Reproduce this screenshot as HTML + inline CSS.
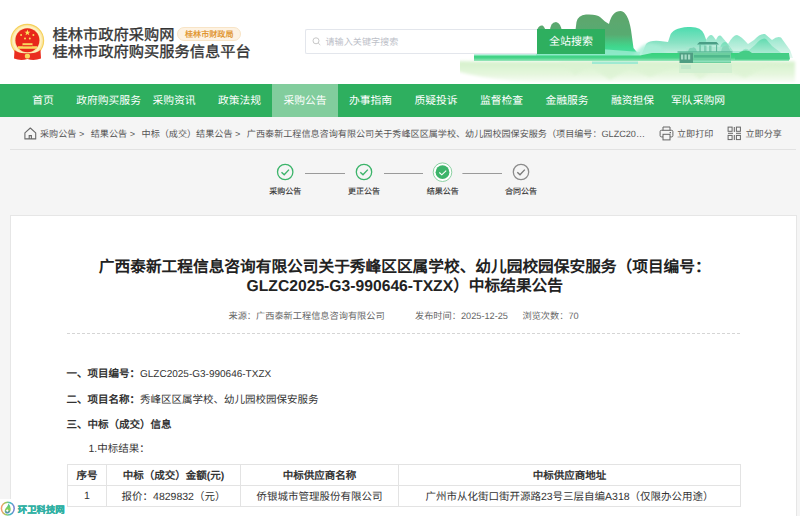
<!DOCTYPE html>
<html lang="zh-CN">
<head>
<meta charset="utf-8">
<style>
*{margin:0;padding:0;box-sizing:border-box}
html,body{width:800px;height:516px;overflow:hidden}
body{text-rendering:geometricPrecision;font-family:"Liberation Sans",sans-serif;background:#f5f5f5;position:relative;color:#333}
.abs{position:absolute;white-space:nowrap}
#hdr{position:absolute;left:0;top:0;width:800px;height:84px;background:#fff}
#nav{position:absolute;left:0;top:84px;width:800px;height:33px;background:#2eaf5f}
#nav .it{position:absolute;white-space:nowrap;top:0;height:33px;width:65.5px;text-align:center;line-height:34.5px;font-size:10.8px;color:#fff}
#nav .on{background:#82cd9d}
.bc{font-size:9.1px;color:#555;line-height:12px}
.bc i.g{display:inline-block;width:1.5px}
.step{position:absolute;font-size:8px;color:#333;-webkit-text-stroke:0.15px #333;text-align:center;width:40px}
#box{position:absolute;left:10px;top:215px;width:787px;height:400px;background:#fff;border:1px solid #e6e6e6}
.ttl{position:absolute;left:0;width:800px;text-align:center;font-size:15.7px;font-weight:bold;color:#222;line-height:19.5px}
.meta{font-size:9.2px;color:#666}
.sec{font-size:10.5px;color:#333}
.sec b{font-weight:bold}
table{position:absolute;left:67px;top:464px;width:674px;border-collapse:collapse;font-size:10.5px;color:#333}
td,th{border:1px solid #e3e3e3;height:21px;text-align:center;padding:0}
th{font-weight:bold}
</style>
</head>
<body>
<div id="hdr">
  <!-- emblem -->
  <svg class="abs" style="left:5px;top:18px" width="45" height="45" viewBox="0 0 45 45">
    <circle cx="22.3" cy="22.6" r="16.3" fill="#fbe7a3" stroke="#f6d15c" stroke-width="1.2"/>
    <circle cx="22.3" cy="22.6" r="13.6" fill="none" stroke="#fff1c4" stroke-width="1.5"/>
    <circle cx="22.4" cy="22.3" r="12" fill="#e8271b"/>
    <polygon points="22.4,11.6 23.2,13.8 25.4,13.8 23.6,15.1 24.3,17.3 22.4,16 20.5,17.3 21.2,15.1 19.4,13.8 21.6,13.8" fill="#fbe25c"/>
    <circle cx="16.1" cy="17" r="0.95" fill="#fbe25c"/><circle cx="28.4" cy="17" r="0.95" fill="#fbe25c"/>
    <circle cx="20" cy="20.5" r="0.95" fill="#fbe25c"/><circle cx="24.8" cy="20.5" r="0.95" fill="#fbe25c"/>
    <rect x="17.5" y="25.2" width="10" height="2.2" fill="#f9d65e"/>
    <rect x="13" y="28.2" width="19" height="2.6" fill="#f9d65e"/>
    <rect x="18" y="27.4" width="9" height="0.8" fill="#e8271b"/>
    <path d="M9.5 32 Q15 36 22.4 35 Q30 36 35.5 32 L36 40.5 Q29 43 22.4 41 Q15.5 43 9 40.5 Z" fill="#ea2d1f"/>
    <circle cx="22.4" cy="38" r="2.6" fill="#f9d65e"/>
  </svg>
  <div class="abs" style="left:52.5px;top:26.5px;font-size:15.25px;line-height:17px;color:#333;-webkit-text-stroke:0.35px #333">桂林市政府采购网<br>桂林市政府购买服务信息平台</div>
  <div class="abs" style="left:177px;top:26.5px;width:63.5px;height:14.5px;border-radius:8px;background:#fdf2e2;border:0.6px solid #f8e4c6;color:#e0901f;-webkit-text-stroke:0.2px #e0901f;font-size:8.1px;line-height:14.5px;text-align:center;padding-left:1px">桂林市财政局</div>
  <!-- landscape -->
  <svg class="abs" style="left:460px;top:0" width="340" height="84" viewBox="460 0 340 84">
    <defs>
      <linearGradient id="m1" x1="0" y1="0" x2="0" y2="1"><stop offset="0" stop-color="#5ea56c"/><stop offset="0.5" stop-color="#58ab71"/><stop offset="0.75" stop-color="#40d68c"/><stop offset="1" stop-color="#4be6ad"/></linearGradient>
      <linearGradient id="m2" x1="0" y1="0" x2="0" y2="1"><stop offset="0" stop-color="#3ddaa8"/><stop offset="0.5" stop-color="#7fe0bf"/><stop offset="1" stop-color="#d2f4e6"/></linearGradient>
      <linearGradient id="m3" x1="0" y1="0" x2="0" y2="1"><stop offset="0" stop-color="#84e3c4"/><stop offset="1" stop-color="#e4f8ef"/></linearGradient><linearGradient id="m4" x1="0" y1="0" x2="0" y2="1"><stop offset="0" stop-color="#4fd6a6"/><stop offset="1" stop-color="#b8eed9"/></linearGradient>
      <linearGradient id="rf" x1="0" y1="0" x2="0" y2="1"><stop offset="0" stop-color="#d5f1cb"/><stop offset="0.6" stop-color="#e4f6dc"/><stop offset="1" stop-color="#f7fcf4"/></linearGradient>
      <linearGradient id="bd" x1="0" y1="0" x2="0" y2="1"><stop offset="0" stop-color="#36d27c"/><stop offset="0.6" stop-color="#45d488"/><stop offset="1" stop-color="#9ae6bb"/></linearGradient>
      <filter id="bl" x="-10%" y="-10%" width="120%" height="120%"><feGaussianBlur stdDeviation="0.5"/></filter>
      <filter id="bl2" x="-10%" y="-30%" width="120%" height="160%"><feGaussianBlur stdDeviation="1.5"/></filter>
    </defs>
    <path d="M436 64 Q448 60.5 474 61.5 L795 61.5 L795 82 L530 82 Q470 79 436 64 Z" fill="url(#rf)" filter="url(#bl2)"/>
    <path d="M560 62 L575 75 L590 66 L610 80 L630 68 L650 77 L680 64 L700 79 L720 66 L745 78 L770 64 L790 62 Z" fill="#dcf3d3" opacity="0.7" filter="url(#bl2)"/>
    <path d="M640 58 L646 44 Q650 40 660 41 L668 42 L670 36 Q672 28 688 27 Q701 26 704 34 L707 42 L709 40 L713 46 L716 58 Z" fill="url(#m2)" opacity="0.92" filter="url(#bl)"/>
    <path d="M704 58 L706 40 Q710 33 713 36 L716 40 Q719 33 722 37 L728 44 Q733 35 737 35 Q741 36 748 44 L754 40 Q760 33 765 34 L772 40 Q777 36 781 37.5 L790 50 L793 58 Z" fill="url(#m3)" opacity="0.95" filter="url(#bl)"/>
    <path d="M716 58 L721 45 Q724 40 727 43 L733 51 L742 51 Q745 47 749 50 L755 45 Q762 37 766 39 L772 46 L780 52 L786 58 Z" fill="url(#m4)" opacity="0.75" filter="url(#bl)"/>
    <path d="M536 58 L537.5 29 Q539 25 542.5 25.5 Q545 27 546 32 L550 32 Q550 22 556 22 Q561 23 562 32 L575 34 L576.5 22 Q578 15 586 14.5 Q597 14 600 17 L605 21.5 L609 24 Q612 11 620.75 11 Q628 12 631 30 L633.5 48 L640 56 L642 58 Z" fill="url(#m1)" filter="url(#bl)"/>
    <path d="M474 51 L520 52 L560 50 L600 49 L640 52 L640 58 L474 58 Z" fill="#a4ecd4" opacity="0.75" filter="url(#bl)"/>
    <path d="M640 48 Q648 40 660 46 L668 56 L630 58 Z" fill="#a6eed6" opacity="0.8" filter="url(#bl2)"/>
    <path d="M474 55.5 L640 55.5 L652 53 L789 53 L789 61 L640 61 L474 61 Z" fill="url(#bd)" filter="url(#bl)"/>
    <path d="M735 56 Q745 47 752 53 L789 53.5 L790 59.5 L735 59.5 Z" fill="#45cd86" filter="url(#bl)"/>
    <rect x="592" y="61.5" width="46" height="2.5" fill="#9fead2"/>
    <rect x="686" y="47" width="44" height="5" fill="#a9e6cf" opacity="0.8"/>
    <path d="M688 52 Q689 47 692 48 Q694 46 696 49 L697 52 Z" fill="#7fd4b6"/>
    <path d="M697 44.5 L719 44.5 L716.5 42 L699.5 42 Z" fill="#4a9e86"/>
    <rect x="699.5" y="44.5" width="1.1" height="7.5" fill="#5fb89b"/><rect x="704" y="45.5" width="2.5" height="6.5" fill="#7fcdb2"/><rect x="709" y="45.5" width="2.5" height="6.5" fill="#7fcdb2"/><rect x="716" y="44.5" width="1.1" height="7.5" fill="#5fb89b"/>
    <path d="M721 52 Q722 45 725 46 Q728 44 729 48 L731 52 Z" fill="#86d8bb"/>
    <rect x="677.5" y="51.3" width="55" height="1.4" fill="#58b996"/>
    <path d="M679.5 52.7 L693 52.7 L693 63 L679.5 63 Z" fill="#4f9e83"/>
    <rect x="681" y="54.5" width="2.2" height="5" fill="#a5dcc6"/><rect x="684.5" y="54.5" width="2.2" height="5" fill="#a5dcc6"/><rect x="688" y="54.5" width="2.2" height="5" fill="#a5dcc6"/>
    <path d="M693 52.7 L731 52.7 L731 63 L693 63 Z" fill="#6ccf9f"/>
    <rect x="694" y="55" width="36" height="2.6" fill="#4fb88c"/>
    <rect x="693" y="60.5" width="38" height="1.6" fill="#8ee0bc"/>
    <path d="M679 64 L732 64 L732 73 L679 73 Z" fill="#cdeecf" opacity="0.7" filter="url(#bl)"/>
    <rect x="681" y="65" width="10" height="4" fill="#b5e3c6" opacity="0.6"/>
  </svg>
  <!-- search -->
  <div class="abs" style="left:305px;top:29px;width:233px;height:25px;border:1px solid #e3e6ec;border-right:none;background:#fff;border-radius:2px 0 0 2px"></div>
  <svg class="abs" style="left:312px;top:37px" width="10" height="9" viewBox="0 0 10 9"><circle cx="4" cy="3.8" r="3" fill="none" stroke="#c8c8c8" stroke-width="1"/><line x1="6.2" y1="6" x2="8.3" y2="8" stroke="#c8c8c8" stroke-width="1"/></svg>
  <div class="abs" style="left:325.5px;top:34.5px;font-size:9.1px;line-height:14px;color:#bcc0c8">请输入关键字搜索</div>
  <div class="abs" style="left:537px;top:29px;width:68px;height:25px;background:#2eaf5f;color:#fff;font-size:11px;line-height:27px;text-align:center">全站搜索</div>
</div>
<div id="nav">
  <div class="it" style="left:10.3px">首页</div>
  <div class="it" style="left:75.8px">政府购买服务</div>
  <div class="it" style="left:141.3px">采购资讯</div>
  <div class="it" style="left:206.8px">政策法规</div>
  <div class="it on" style="left:272.3px">采购公告</div>
  <div class="it" style="left:337.8px">办事指南</div>
  <div class="it" style="left:403.3px">质疑投诉</div>
  <div class="it" style="left:468.8px">监督检查</div>
  <div class="it" style="left:534.3px">金融服务</div>
  <div class="it" style="left:599.8px">融资担保</div>
  <div class="it" style="left:665.3px">军队采购网</div>
</div>
<!-- breadcrumb -->
<svg class="abs" style="left:23.5px;top:126.5px" width="13" height="13" viewBox="0 0 13 13"><path d="M0.9 5.8 L6.3 1 L11.7 5.8 V11.9 H0.9 Z" fill="none" stroke="#6a6a6a" stroke-width="1.1" stroke-linejoin="round"/><path d="M5.2 11.9 V8.6 H7.4 V11.9" fill="none" stroke="#6a6a6a" stroke-width="1.1"/></svg>
<div class="abs bc" style="left:40px;top:127.5px;width:605px;overflow:hidden;text-overflow:ellipsis">采购公告 &gt;&nbsp; <i class="g"></i>结果公告 &gt;&nbsp; <i class="g"></i>中标（成交）结果公告 &gt;&nbsp; <i class="g"></i>广西泰新工程信息咨询有限公司关于秀峰区区属学校、幼儿园校园保安服务（项目编号：GLZC2025-G3-990646-TXZX）中标结果公告</div>
<svg class="abs" style="left:658.5px;top:126px" width="15" height="15" viewBox="0 0 15 15"><path d="M4 4.3 V1 H11 V4.3" fill="none" stroke="#666" stroke-width="1"/><rect x="1.1" y="4.3" width="12.8" height="6.6" rx="1.3" fill="none" stroke="#666" stroke-width="1"/><rect x="4" y="8.3" width="7" height="5.6" fill="#f5f5f5" stroke="#666" stroke-width="1"/><rect x="10.6" y="6" width="1.4" height="1.2" fill="#666"/></svg>
<div class="abs bc" style="left:677px;top:127.5px">立即打印</div>
<svg class="abs" style="left:727px;top:126px" width="15" height="15" viewBox="0 0 15 15" fill="none" stroke="#666" stroke-width="1"><rect x="1.1" y="1.1" width="4" height="4.2"/><rect x="9.4" y="1.1" width="4" height="4.2"/><rect x="1.1" y="9.4" width="4" height="4.2"/><rect x="9.4" y="9.4" width="4" height="4.2"/><path d="M1 7.3 H6 M9 7.3 H14 M7.3 1 V6 M7.3 9 V14"/></svg>
<div class="abs bc" style="left:745.5px;top:127.5px">立即分享</div>
<div class="abs" style="left:10px;top:149px;width:786px;height:1px;background:#e2e2e2"></div>
<!-- steps -->
<svg class="abs" style="left:260px;top:155px" width="290" height="35" viewBox="260 155 290 35">
  <circle cx="285.2" cy="172" r="7.7" fill="none" stroke="#3cb46a" stroke-width="1.3"/>
  <path d="M281.5 172.2 L284.2 174.8 L289 169.6" fill="none" stroke="#3cb46a" stroke-width="1.4"/>
  <line x1="305" y1="173.5" x2="345" y2="173.5" stroke="#9a9a9a" stroke-width="1"/>
  <circle cx="364" cy="172" r="7.7" fill="none" stroke="#3cb46a" stroke-width="1.3"/>
  <path d="M360.3 172.2 L363 174.8 L367.8 169.6" fill="none" stroke="#3cb46a" stroke-width="1.4"/>
  <line x1="384" y1="173.5" x2="423" y2="173.5" stroke="#9a9a9a" stroke-width="1"/>
  <circle cx="442.5" cy="172.2" r="9.3" fill="#fff" stroke="#7fcc98" stroke-width="0.9"/>
  <circle cx="442.5" cy="172.2" r="6.9" fill="#3cb46a"/>
  <path d="M439.3 172.5 L441.8 174.8 L446.2 170.6" fill="none" stroke="#fff" stroke-width="1.1"/>
  <line x1="462.4" y1="173.5" x2="502" y2="173.5" stroke="#9a9a9a" stroke-width="1"/>
  <circle cx="521" cy="172" r="7.7" fill="none" stroke="#8c8c8c" stroke-width="1.3"/>
  <path d="M517.3 172.2 L520 174.8 L524.8 169.6" fill="none" stroke="#7a7a7a" stroke-width="1.4"/>
</svg>
<div class="step" style="left:265.2px;top:186px">采购公告</div>
<div class="step" style="left:344px;top:186px">更正公告</div>
<div class="step" style="left:422.7px;top:186px">结果公告</div>
<div class="step" style="left:501px;top:186px">合同公告</div>
<!-- content -->
<div id="box"></div>
<div class="ttl" style="top:257.5px;padding-left:9.5px">广西泰新工程信息咨询有限公司关于秀峰区区属学校、幼儿园校园保安服务（项目编号：<br>GLZC2025-G3-990646-TXZX）中标结果公告</div>
<div class="abs meta" style="left:228.5px;top:308px">来源：广西泰新工程信息咨询有限公司</div>
<div class="abs meta" style="left:415px;top:308px">发布时间：2025-12-25</div>
<div class="abs meta" style="left:522.5px;top:308px">浏览次数：70</div>
<div class="abs" style="left:67px;top:333px;width:673px;height:0;border-top:1px dashed #d5d5d5"></div>
<div class="abs sec" style="left:66.5px;top:366px"><b>一、项目编号：</b><span style="font-size:10px">GLZC2025-G3-990646-TXZX</span></div>
<div class="abs sec" style="left:66.5px;top:391.5px"><b>二、项目名称：</b>秀峰区区属学校、幼儿园校园保安服务</div>
<div class="abs sec" style="left:66.5px;top:416.5px"><b>三、中标（成交）信息</b></div>
<div class="abs sec" style="left:88.5px;top:440.5px">1.中标结果：</div>
<table>
<tr><th style="width:39px">序号</th><th style="width:134px">中标（成交）金额(元)</th><th style="width:158px">中标供应商名称</th><th>中标供应商地址</th></tr>
<tr><td>1</td><td>报价：4829832（元）</td><td>侨银城市管理股份有限公司</td><td>广州市从化街口街开源路23号三层自编A318（仅限办公用途）</td></tr>
</table>
<!-- watermark -->
<div class="abs" style="left:0;top:499px;width:66px;height:17px;background:#fff"></div>
<svg class="abs" style="left:0;top:500.5px" width="16" height="16" viewBox="0 0 16 16">
  <defs><linearGradient id="wr" x1="0" y1="0" x2="1" y2="0"><stop offset="0" stop-color="#f59a6b"/><stop offset="0.35" stop-color="#9ccf5a"/><stop offset="0.7" stop-color="#3dbcc9"/><stop offset="1" stop-color="#7d7fd0"/></linearGradient>
  <linearGradient id="wd" x1="0" y1="0" x2="0" y2="1"><stop offset="0" stop-color="#3cc6a0"/><stop offset="0.6" stop-color="#8ccf4e"/><stop offset="1" stop-color="#3f7fd0"/></linearGradient></defs>
  <circle cx="7.8" cy="7.6" r="6.4" fill="none" stroke="url(#wr)" stroke-width="1.5"/>
  <path d="M8.6 2.6 Q12 7 10 11 Q8 13.5 5.6 12 Q3.8 10 5.6 7.5 Q8 5 8.6 2.6 Z" fill="url(#wd)"/>
  <path d="M7.3 8.3 L8.6 9.6 L7.3 10.9 L6 9.6 Z" fill="#fff"/>
</svg>
<div class="abs" style="left:17.8px;top:504px;font-size:9.4px;line-height:12px;font-weight:bold;color:#2fb0a3;-webkit-text-stroke:0.3px #2fb0a3">环卫科技网</div>
</body>
</html>
